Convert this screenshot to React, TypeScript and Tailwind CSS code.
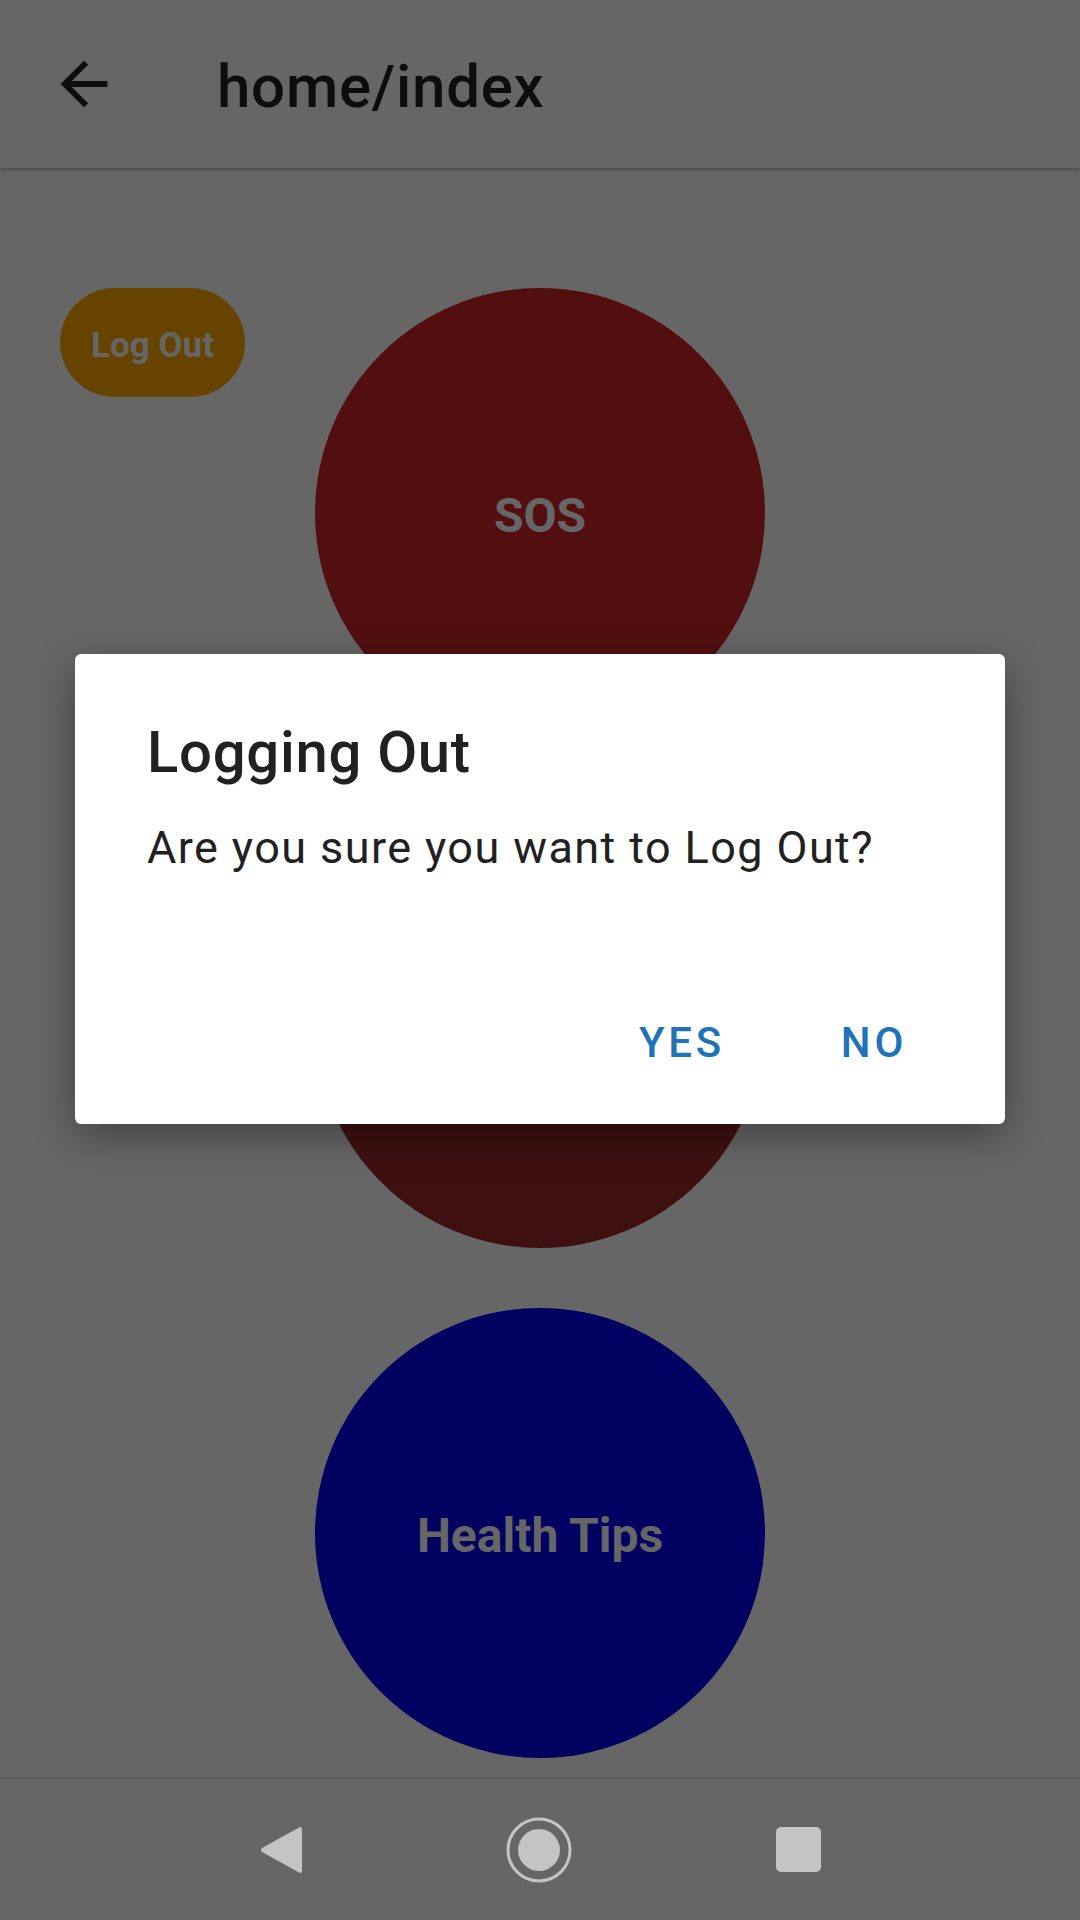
// Home screen with the "Logging Out" confirmation dialog open.
// The scrim dims the app (white -> #666); the system nav bar stays above it.

const SCRIM = 'absolute inset-x-0 top-0 bottom-[143px] bg-black/60';

export default function App() {
  return (
    <div className="relative flex h-[1920px] w-[1080px] flex-col overflow-hidden bg-white font-['Roboto',sans-serif]">
      {/* App bar */}
      <header className="z-10 flex h-[168px] shrink-0 items-center bg-white shadow-[0_2px_4px_rgba(0,0,0,0.28)]">
        <div className="flex w-[217px] justify-start pl-[49px]">
          <svg width="70" height="70" viewBox="0 0 24 24" aria-hidden="true">
            <path d="M20 11H7.83l5.59-5.59L12 4l-8 8 8 8 1.41-1.41L7.83 13H20v-2z" fill="#212121" />
          </svg>
        </div>
        <h1 className="pt-[5px] text-[60px] font-medium leading-none tracking-[0.0125em] text-[#212121]">
          home/index
        </h1>
      </header>

      {/* Content */}
      <main className="relative flex-1">
        <button
          type="button"
          className="absolute left-[60px] top-[120px] flex h-[109px] w-[185px] items-center justify-center rounded-full bg-[#ffaa00] pt-[7px] text-[35px] font-bold text-white"
        >
          Log Out
        </button>

        <div className="flex flex-col items-center gap-[60px] pt-[120px]">
          <Cerchio colore="bg-[#d02628]" testo="SOS" />
          <Cerchio colore="bg-[#9b282a]" testo="" />
          <Cerchio colore="bg-[#0000f0]" testo="Health Tips" />
        </div>
      </main>

      {/* System navigation bar */}
      <nav className="z-30 flex h-[143px] shrink-0 items-center justify-center gap-[204px] border-t-2 border-[#595959] bg-[#666666]">
        <svg width="42" height="48" viewBox="0 0 42 48" aria-hidden="true">
          <path d="M39 1.5Q42 0 42 3.5V44.5Q42 48 39 46.5L2 26Q0 24 2 22Z" fill="#c4c4c4" />
        </svg>
        <svg width="66" height="66" viewBox="0 0 66 66" aria-hidden="true">
          <circle cx="33" cy="33" r="31" fill="none" stroke="#c4c4c4" strokeWidth="3" />
          <circle cx="33" cy="33" r="21" fill="#c4c4c4" />
        </svg>
        <div className="h-[45px] w-[45px] rounded-[5px] bg-[#c4c4c4]" />
      </nav>

      {/* Scrim + dialog */}
      <div className={`${SCRIM} z-20 flex items-center justify-center`}>
        <div className="flex h-[470px] w-[930px] flex-col rounded-[6px] bg-white pb-[31px] pl-[72px] pt-[64px] shadow-[0_12px_40px_rgba(0,0,0,0.35)]">
          <h2 className="text-[58px] font-medium leading-[68px] tracking-[0.0125em] text-[#212121]">
            Logging Out
          </h2>
          <p className="mt-[32px] text-[45px] leading-[60px] tracking-[0.03125em] text-[#212121]">
            Are you sure you want to Log Out?
          </p>
          <div className="mt-auto flex justify-end gap-[12px] pr-[41px]">
            <button type="button" className="flex h-[100px] w-[180px] items-center justify-center text-[42px] font-medium uppercase tracking-[0.09em] text-[#1f74b9]">
              Yes
            </button>
            <button type="button" className="flex h-[100px] w-[180px] items-center justify-center text-[42px] font-medium uppercase tracking-[0.09em] text-[#1f74b9]">
              No
            </button>
          </div>
        </div>
      </div>
    </div>
  );
}

function Cerchio(props: { colore: string; testo: string }) {
  return (
    <div
      className={`flex h-[450px] w-[450px] items-center justify-center rounded-full pt-[5px] text-[48px] font-bold text-white ${props.colore}`}
    >
      {props.testo}
    </div>
  );
}
